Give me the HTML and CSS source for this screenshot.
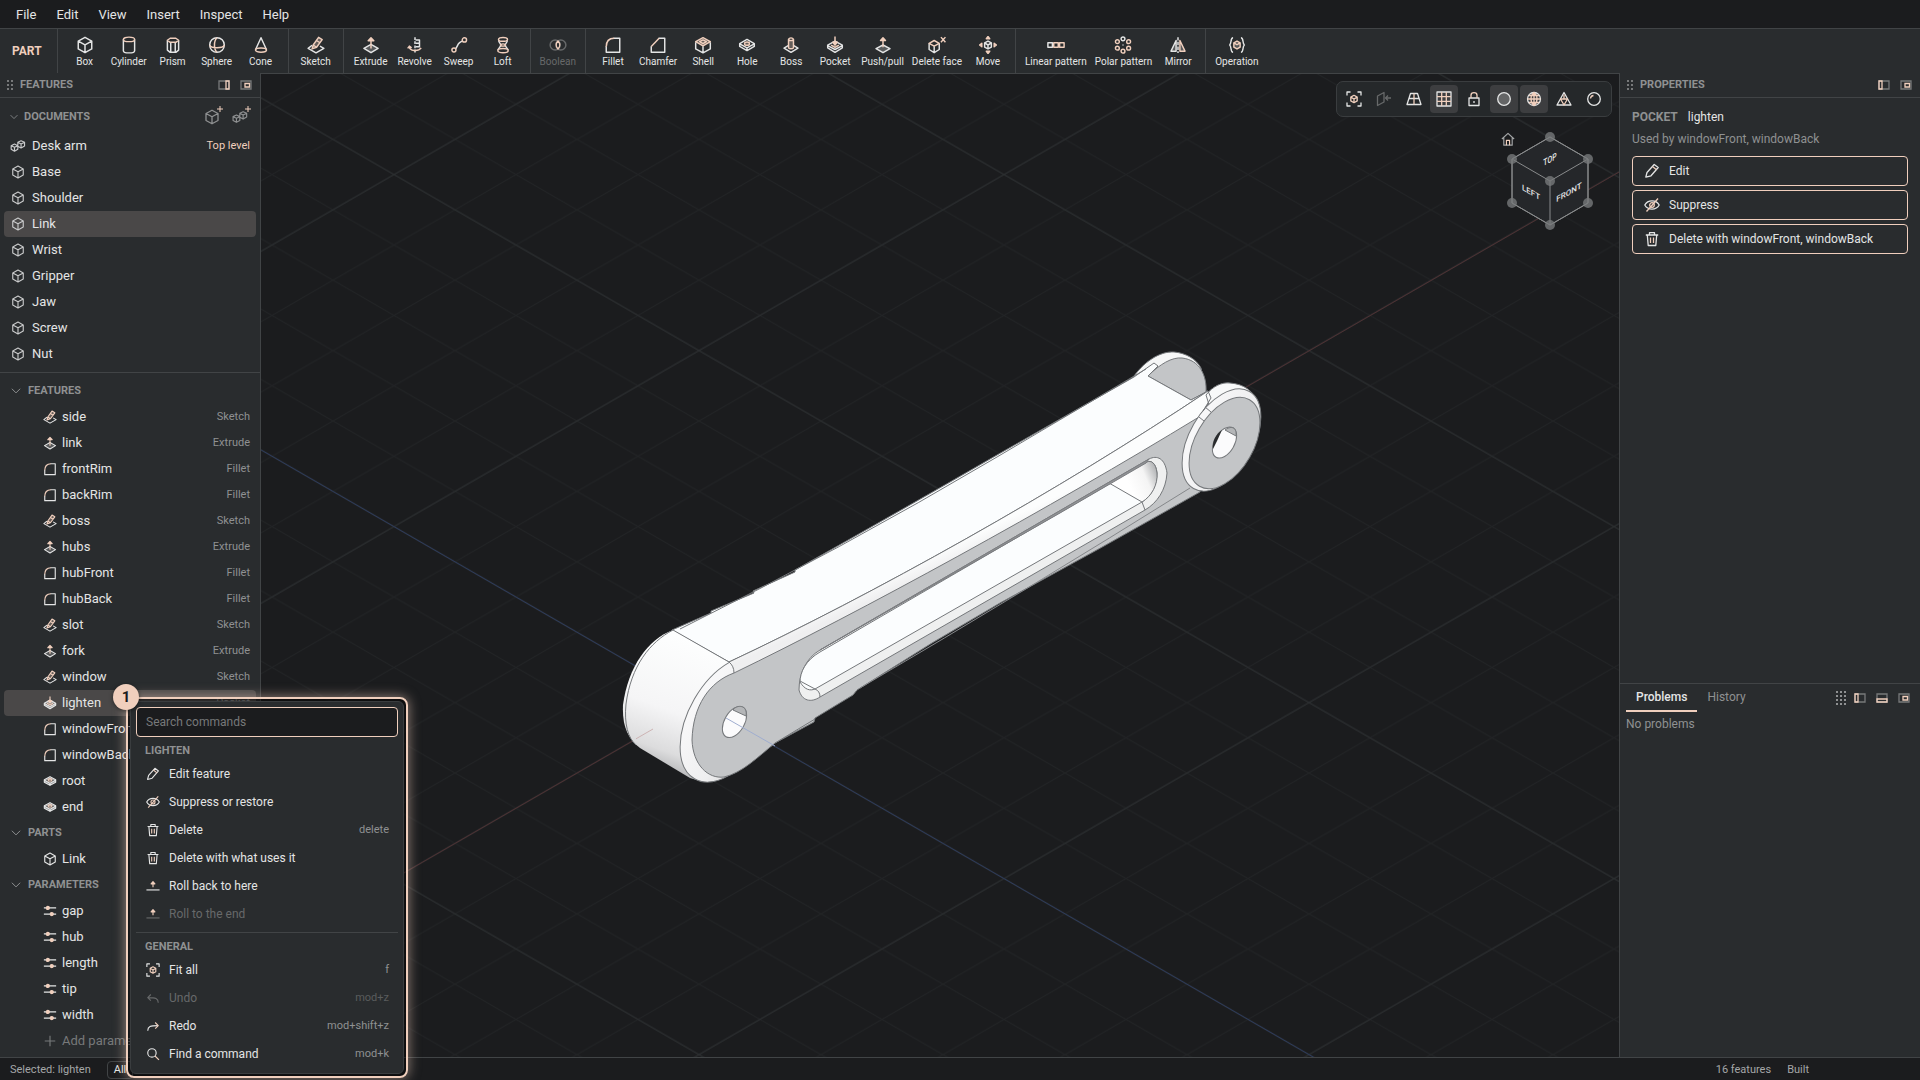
FILE: index.html
```html
<!DOCTYPE html>
<html lang="en">
<head>
<meta charset="utf-8">
<title>Desk arm – Link</title>
<link rel="stylesheet" href="styles.css">
</head>
<body>
<svg class="defs" aria-hidden="true">
  <symbol id="box" viewBox="0 0 16 16"><path d="M8 1.2 14 4.5v7L8 14.8 2 11.500v-7zM2 4.500l6 3.300 6-3.300M8 7.800v7"/></symbol>
  <symbol id="cylinder" viewBox="0 0 16 16"><path d="M3 3.200v9.800c0 1 2 2 5 2s5-1 5-2V3.200"/><ellipse class="a" cx="8" cy="3" rx="5" ry="2"/></symbol>
  <symbol id="prism" viewBox="0 0 16 16"><path d="M3 4v8.500L5.500 14.500h5L13 12.500V4M6 5.800v8.700M10 5.800v8.700"/><path class="a" d="M3 3.800 5.500 2h5L13 3.800 10.500 5.600h-5z"/></symbol>
  <symbol id="sphere" viewBox="0 0 16 16"><circle cx="8" cy="8" r="6.500"/><path class="a" d="M1.500 8c1 3.200 12 3.200 13 0M8 1.500C5 4 5 12 8 14.500"/></symbol>
  <symbol id="cone" viewBox="0 0 16 16"><path d="M3.200 12 8 1.500l4.800 10.500"/><ellipse class="a" cx="8" cy="12.500" rx="4.900" ry="1.900"/></symbol>
  <symbol id="sketch" viewBox="0 0 16 16"><path d="M4.500 8.200 1 11l7 4 7-4-3.500-2"/><path class="a g" d="M4.500 11.500 5.500 8l4.800-6.800 3.200 2L8.500 10zM8.500 4l3 2M5.500 8l3 2"/></symbol>
  <symbol id="extrude" viewBox="0 0 16 16"><path class="f" d="m8 7.500 6.300 3.500L8 14.800 1.700 11z"/><path class="a" d="M8 11V2M5.500 4.200 8 1.500l2.500 2.700z"/></symbol>
  <symbol id="revolve" viewBox="0 0 16 16"><path d="M8 1v14" stroke-dasharray="2.500 1.200"/><path d="M8.500 3.500h3.500v6H8.500M8.500 6.500H12"/><path class="a" d="M3 9.500c0 4 8 4.500 10.500 1M1.500 11 3 9l2 1.500"/></symbol>
  <symbol id="sweep" viewBox="0 0 16 16"><path d="M4.500 11.500c2.500-1 1.500-6 7-7"/><circle class="a" cx="3.500" cy="12.500" r="1.800"/><circle class="a" cx="12.800" cy="3.500" r="1.900"/></symbol>
  <symbol id="loft" viewBox="0 0 16 16"><path d="M4.200 4c0 2 1.800 2.500 1.800 4s-2 3-2.500 4.500M11.800 4c0 2-1.800 2.500-1.800 4s2 3 2.500 4.500"/><ellipse class="a" cx="8" cy="3" rx="4" ry="1.700"/><ellipse class="a" cx="8" cy="8" rx="2.200" ry="1"/><ellipse class="a" cx="8" cy="13" rx="4.600" ry="1.800"/></symbol>
  <symbol id="boolean" viewBox="0 0 16 16"><circle cx="5.500" cy="8" r="4.500"/><circle cx="10.500" cy="8" r="4.500"/><path class="a" d="M8 4.500c2 2 2 5 0 7-2-2-2-5 0-7z"/></symbol>
  <symbol id="fillet" viewBox="0 0 16 16"><path d="M8.500 2H14v12.500H2V9"/><path class="a" d="M2 9.500C2 5 4.500 2 9 2"/></symbol>
  <symbol id="chamfer" viewBox="0 0 16 16"><path d="M8.500 2H14v12.500H2V9"/><path class="a" d="M2 9.300 9 2"/></symbol>
  <symbol id="shell" viewBox="0 0 16 16"><path d="M1.500 5.500v6L8 15l6.500-3.500v-6M8 9v6"/><path class="a g" d="M8 1.500 14.500 5 8 8.800 1.500 5zM8 3.500 11 5 8 6.800 5 5z"/></symbol>
  <symbol id="hole" viewBox="0 0 16 16"><path d="m8 3 6.500 3.700v2.600L8 13 1.500 9.300V6.700zM1.500 7 8 10.500 14.500 7M8 10.500V13"/><ellipse class="a g" cx="8" cy="6.800" rx="2.200" ry="1.500"/></symbol>
  <symbol id="boss" viewBox="0 0 16 16"><path d="M5.500 8.500 1.800 10.700 8 14.500l6.200-3.800-3.700-2.200"/><path class="a g" d="M5.800 3v7.500c.8 1.200 3.600 1.200 4.400 0V3M5.800 3c.8-1.800 3.600-1.800 4.400 0-.8 1.500-3.600 1.500-4.400 0z"/></symbol>
  <symbol id="pocket" viewBox="0 0 16 16"><path d="m8 4.500 6.500 3.700v2.300L8 14.500l-6.500-4V8.200zM1.500 8.500 8 12l6.500-3.500"/><path class="a g" d="M8 .5v7M6 5.500 8 8l2-2.500zM4.500 8.200 8 10.200l3.500-2"/></symbol>
  <symbol id="pushpull" viewBox="0 0 16 16"><path class="f" d="m8 8 6.200 3.200L8 14.800l-6.200-3.600z"/><path class="a" d="M8 10V2M5.800 4 8 1.500 10.200 4z"/></symbol>
  <symbol id="delface" viewBox="0 0 16 16"><path d="M1 6.500V12l4.500 2.800L10 12V6.500M5.500 9v5.800"/><path class="a" d="M1 6.500 5.500 4 10 6.500 5.500 9zM11.500 1l4 4.500M15.500 1l-4 4.500"/></symbol>
  <symbol id="move" viewBox="0 0 16 16"><path d="m8 4.500 3 1.700v3.600L8 11.500 5 9.800V6.200zM5 6.200 8 8l3-1.800M8 8v3.500"/><path class="a g" d="M6.500 2.500 8 .5l1.500 2zM6.500 13.500l1.500 2 1.500-2zM2.500 6.500.5 8l2 1.500zM13.500 6.500l2 1.500-2 1.500z"/></symbol>
  <symbol id="linear" viewBox="0 0 16 16"><path d="M.8 6h4v4h-4z"/><path class="a" d="M6 6h4v4H6zM11.200 6h4v4h-4z"/></symbol>
  <symbol id="polar" viewBox="0 0 16 16"><circle cx="8" cy="2.500" r="1.700"/><g class="a"><circle cx="13" cy="5" r="1.700"/><circle cx="13" cy="10.800" r="1.700"/><circle cx="8" cy="13.500" r="1.700"/><circle cx="3" cy="10.800" r="1.700"/><circle cx="3" cy="5" r="1.700"/></g><path d="M8 7.500v1"/></symbol>
  <symbol id="mirror" viewBox="0 0 16 16"><path d="M6.300 4v9.500H1.800z" class="f"/><path class="a f" d="M9.700 4v9.500h4.500z"/><path d="M8 1v14" stroke-dasharray="3 1.200"/></symbol>
  <symbol id="operation" viewBox="0 0 16 16"><path d="M4.500 1.500c-2.500 0-1.200 5-3 6.500 1.800 1.500.5 6.500 3 6.500M11.500 1.500c2.500 0 1.200 5 3 6.500-1.800 1.500-.5 6.500-3 6.500"/><path class="a f" d="m8 4.500 2.800 1.600v3.800L8 11.500 5.200 9.900V6.100zM5.200 6.100 8 7.700l2.800-1.600"/></symbol>
  <symbol id="asm" viewBox="0 0 18 16"><path d="m5 5.800 3.800 1.800v4.200L5 14l-3.800-2.200V7.600zM1.200 7.600 5 9.500l3.800-1.900M5 9.500V14M12.500 2l4 1.800V8l-4 2.300L8.800 8.200V3.800zM8.800 3.800l3.700 2 4-2M12.500 5.800v4.500"/></symbol>
  <symbol id="plus" viewBox="0 0 16 16"><path d="M8 2v12M2 8h12"/></symbol>
  <symbol id="sliders" viewBox="0 0 16 16"><path d="M1 4.500h14M1 11.500h14"/><circle class="a s" cx="5.500" cy="4.500" r="1.800"/><circle class="a s" cx="10" cy="11.500" r="1.800"/></symbol>
  <symbol id="down" viewBox="0 0 16 16"><path d="m2.500 5 5.500 5.500L13.500 5"/></symbol>
  <symbol id="grip" viewBox="0 0 8 12"><path d="M1 1h2v2H1zM5 1h2v2H5zM1 5h2v2H1zM5 5h2v2H5zM1 9h2v2H1zM5 9h2v2H5z"/></symbol>
  <symbol id="dockr" viewBox="0 0 12 10"><path d="M1 1h10v8H1z"/><path class="a" d="M8 1h3v8H8z"/></symbol>
  <symbol id="dockl" viewBox="0 0 12 10"><path d="M1 1h10v8H1z"/><path class="a" d="M1 1h3v8H1z"/></symbol>
  <symbol id="dockb" viewBox="0 0 12 10"><path d="M1 1h10v8H1z"/><path class="a" d="M1 6h10v3H1z"/></symbol>
  <symbol id="float" viewBox="0 0 12 10"><path d="M1 1h10v8H1z"/><path class="a" d="M5 3.500h4.500v3.500H5z"/></symbol>
  <symbol id="pencil" viewBox="0 0 16 16"><path d="M1.800 14.200 3 9.500l7.200-8 4 3L7 12.800z"/><path class="a" d="m8.500 3.500 4 3.200"/></symbol>
  <symbol id="hide" viewBox="0 0 16 16"><path d="M.8 8c3-5.500 11.400-5.500 14.400 0-3 5.500-11.400 5.500-14.400 0z"/><circle class="a" cx="8" cy="8" r="2.300"/><path class="a" d="M2.500 14.500 14 1.500"/></symbol>
  <symbol id="trash" viewBox="0 0 16 16"><path d="M1.800 4h12.400M5.500 4V1.700h5V4M3.300 4l.9 10.500h7.600L12.700 4"/><path class="a" d="M6.500 6.500V12M9.500 6.500V12"/></symbol>
  <symbol id="roll" viewBox="0 0 16 16"><path d="M.5 12.500h15"/><path class="a" d="M8 9.500V4M5.800 5.500 8 3l2.200 2.500z"/></symbol>
  <symbol id="fit" viewBox="0 0 16 16"><path d="M1 4.500V1h3.500M11.500 1H15v3.500M15 11.500V15h-3.500M4.500 15H1v-3.500"/><path class="a" d="m8 4.300 3.200 1.800v3.800L8 11.700 4.800 9.900V6.100zM4.800 6.100 8 8l3.200-1.900M8 8v3.700"/></symbol>
  <symbol id="undo" viewBox="0 0 16 16"><path d="M14 13.500c0-5-3-6-11.500-6M5.500 4 2 7.500 5.500 11"/></symbol>
  <symbol id="redo" viewBox="0 0 16 16"><path d="M2 13.500c0-5 3-6 11.500-6"/><path class="a" d="M10.500 4 14 7.500 10.500 11"/></symbol>
  <symbol id="find" viewBox="0 0 16 16"><circle cx="6.800" cy="6.800" r="4.800"/><path class="a" d="m10.300 10.300 4.500 4.500"/></symbol>
  <symbol id="section" viewBox="0 0 16 16"><path d="M1.500 5 8 1.500V11l-6.500 3.500z"/><path d="M9.500 7H15M12 4.500 9.500 7 12 9.500"/></symbol>
  <symbol id="persp" viewBox="0 0 16 16"><path d="M4.500 2.500h7L15 13.500H1zM3 7.500h10"/><path class="a" d="M8 2.500v11"/></symbol>
  <symbol id="gridi" viewBox="0 0 16 16"><path d="M1 1h14v14H1z"/><path class="a" d="M5.700 1v14M10.300 1v14M1 5.700h14M1 10.300h14"/></symbol>
  <symbol id="lock" viewBox="0 0 16 16"><path d="M3 7h10v7.500H3zM8 10v2"/><path class="a" d="M5 7V4.200C5 .8 11 .8 11 4.200V7"/></symbol>
  <symbol id="disc" viewBox="0 0 16 16"><circle class="f" cx="8" cy="8" r="6.300"/></symbol>
  <symbol id="globe" viewBox="0 0 16 16"><circle cx="8" cy="8" r="6.500"/><path class="a" d="M8 1.500v13M1.500 8h13M3 4.500h10M3 11.500h10M8 1.500c-4 3-4 10 0 13 4-3 4-10 0-13z"/></symbol>
  <symbol id="tri" viewBox="0 0 16 16"><path d="M8 1.500 15 14H1z"/><path class="a" d="M4.500 8h7L8 14zM8 3.500V8"/></symbol>
  <symbol id="shine" viewBox="0 0 16 16"><circle cx="8" cy="8" r="6.300"/><path class="a" d="M4.500 7.500C4.700 5.800 5.800 4.700 7.500 4.500"/></symbol>
  <symbol id="home" viewBox="0 0 16 16"><path d="M1 8 8 1.500 15 8M3.200 6.500V15h9.600V6.500"/><path class="a" d="M6.200 15V9.500h3.600V15"/></symbol>
</svg>

<div class="app">
  <nav class="menubar">
    <button>File</button><button>Edit</button><button>View</button><button>Insert</button><button>Inspect</button><button>Help</button>
  </nav>

  <div class="toolbar">
    <div class="mode">PART</div>
    <div class="group">
      <button><svg><use href="#box"/></svg>Box</button>
      <button><svg><use href="#cylinder"/></svg>Cylinder</button>
      <button><svg><use href="#prism"/></svg>Prism</button>
      <button><svg><use href="#sphere"/></svg>Sphere</button>
      <button><svg><use href="#cone"/></svg>Cone</button>
    </div>
    <div class="group">
      <button><svg><use href="#sketch"/></svg>Sketch</button>
    </div>
    <div class="group">
      <button><svg><use href="#extrude"/></svg>Extrude</button>
      <button><svg><use href="#revolve"/></svg>Revolve</button>
      <button><svg><use href="#sweep"/></svg>Sweep</button>
      <button><svg><use href="#loft"/></svg>Loft</button>
    </div>
    <div class="group">
      <button disabled><svg><use href="#boolean"/></svg>Boolean</button>
    </div>
    <div class="group">
      <button><svg><use href="#fillet"/></svg>Fillet</button>
      <button><svg><use href="#chamfer"/></svg>Chamfer</button>
      <button><svg><use href="#shell"/></svg>Shell</button>
      <button><svg><use href="#hole"/></svg>Hole</button>
      <button><svg><use href="#boss"/></svg>Boss</button>
      <button><svg><use href="#pocket"/></svg>Pocket</button>
      <button><svg><use href="#pushpull"/></svg>Push/pull</button>
      <button><svg><use href="#delface"/></svg>Delete face</button>
      <button><svg><use href="#move"/></svg>Move</button>
    </div>
    <div class="group">
      <button><svg><use href="#linear"/></svg>Linear pattern</button>
      <button><svg><use href="#polar"/></svg>Polar pattern</button>
      <button><svg><use href="#mirror"/></svg>Mirror</button>
    </div>
    <div class="group">
      <button><svg><use href="#operation"/></svg>Operation</button>
    </div>
  </div>

  <div class="work">
    <aside class="left">
      <header class="panel-head">
        <svg class="grip"><use href="#grip"/></svg><h2>FEATURES</h2>
        <button class="dock" aria-label="Dock right"><svg><use href="#dockr"/></svg></button>
        <button class="dock" aria-label="Float"><svg><use href="#float"/></svg></button>
      </header>
      <section class="docs">
        <div class="docs-head">
          <svg class="chev"><use href="#down"/></svg><h3>DOCUMENTS</h3>
          <button class="new" aria-label="New part"><svg><use href="#box"/></svg><svg class="add"><use href="#plus"/></svg></button>
          <button class="new" aria-label="New assembly"><svg><use href="#asm"/></svg><svg class="add"><use href="#plus"/></svg></button>
        </div>
        <ul>
          <li><button class="row"><svg class="wide"><use href="#asm"/></svg>Desk arm<small class="top">Top level</small></button></li>
          <li><button class="row"><svg><use href="#box"/></svg>Base</button></li>
          <li><button class="row"><svg><use href="#box"/></svg>Shoulder</button></li>
          <li><button class="row on"><svg><use href="#box"/></svg>Link</button></li>
          <li><button class="row"><svg><use href="#box"/></svg>Wrist</button></li>
          <li><button class="row"><svg><use href="#box"/></svg>Gripper</button></li>
          <li><button class="row"><svg><use href="#box"/></svg>Jaw</button></li>
          <li><button class="row"><svg><use href="#box"/></svg>Screw</button></li>
          <li><button class="row"><svg><use href="#box"/></svg>Nut</button></li>
        </ul>
      </section>
      <section class="tree">
        <h3 class="branch"><svg><use href="#down"/></svg>FEATURES</h3>
        <ul>
          <li><button class="row"><svg><use href="#sketch"/></svg>side<small>Sketch</small></button></li>
          <li><button class="row"><svg><use href="#extrude"/></svg>link<small>Extrude</small></button></li>
          <li><button class="row"><svg><use href="#fillet"/></svg>frontRim<small>Fillet</small></button></li>
          <li><button class="row"><svg><use href="#fillet"/></svg>backRim<small>Fillet</small></button></li>
          <li><button class="row"><svg><use href="#sketch"/></svg>boss<small>Sketch</small></button></li>
          <li><button class="row"><svg><use href="#extrude"/></svg>hubs<small>Extrude</small></button></li>
          <li><button class="row"><svg><use href="#fillet"/></svg>hubFront<small>Fillet</small></button></li>
          <li><button class="row"><svg><use href="#fillet"/></svg>hubBack<small>Fillet</small></button></li>
          <li><button class="row"><svg><use href="#sketch"/></svg>slot<small>Sketch</small></button></li>
          <li><button class="row"><svg><use href="#extrude"/></svg>fork<small>Extrude</small></button></li>
          <li><button class="row"><svg><use href="#sketch"/></svg>window<small>Sketch</small></button></li>
          <li><button class="row on"><svg class="solid"><use href="#pocket"/></svg>lighten<small>Pocket</small></button></li>
          <li><button class="row"><svg><use href="#fillet"/></svg>windowFront</button></li>
          <li><button class="row"><svg><use href="#fillet"/></svg>windowBack</button></li>
          <li><button class="row"><svg class="solid"><use href="#hole"/></svg>root</button></li>
          <li><button class="row"><svg class="solid"><use href="#hole"/></svg>end</button></li>
        </ul>
        <h3 class="branch"><svg><use href="#down"/></svg>PARTS</h3>
        <ul><li><button class="row"><svg><use href="#box"/></svg>Link</button></li></ul>
        <h3 class="branch"><svg><use href="#down"/></svg>PARAMETERS</h3>
        <ul>
          <li><button class="row"><svg><use href="#sliders"/></svg>gap</button></li>
          <li><button class="row"><svg><use href="#sliders"/></svg>hub</button></li>
          <li><button class="row"><svg><use href="#sliders"/></svg>length</button></li>
          <li><button class="row"><svg><use href="#sliders"/></svg>tip</button></li>
          <li><button class="row"><svg><use href="#sliders"/></svg>width</button></li>
          <li><button class="row dim"><svg><use href="#plus"/></svg>Add parameter</button></li>
        </ul>
      </section>
    </aside>

    <main class="view">
      <svg class="scene" viewBox="261 74 1358 983" preserveAspectRatio="xMidYMid slice">
        <defs>
          <pattern id="minor" patternUnits="userSpaceOnUse" x="699" y="702.600" width="122" height="70.400">
            <path d="M-122-70.400 244 140.800M-122 140.800 244-70.400M0-70.400 244 70.400M-122 0 122 140.800M0 140.800 244 0M-122 70.400 122-70.400" stroke="#222426"/>
          </pattern>
          <pattern id="major" patternUnits="userSpaceOnUse" x="699" y="702.600" width="610" height="352">
            <path d="M-610-352 1220 704M-610 704 1220-352M0-352 1220 352M-610 0 610 704M0 704 1220 0M-610 352 610-352" stroke="#2c2f31"/>
          </pattern>
          <linearGradient id="end" gradientUnits="userSpaceOnUse" x1="690" y1="640" x2="645" y2="765">
            <stop offset="0" stop-color="#fdfefe"/><stop offset=".55" stop-color="#f5f5f6"/><stop offset=".85" stop-color="#dcdcdd"/><stop offset="1" stop-color="#b4b5b7"/>
          </linearGradient>
          <linearGradient id="rim" gradientUnits="userSpaceOnUse" x1="710" y1="650" x2="700" y2="785">
            <stop offset="0" stop-color="#fdfdfe"/><stop offset=".6" stop-color="#efeff0"/><stop offset="1" stop-color="#c2c3c5"/>
          </linearGradient>
          <linearGradient id="hub" gradientUnits="userSpaceOnUse" x1="1215" y1="385" x2="1225" y2="492">
            <stop offset="0" stop-color="#fdfdfe"/><stop offset=".65" stop-color="#eeeeef"/><stop offset="1" stop-color="#b2b4b6"/>
          </linearGradient>
          <linearGradient id="bevel" gradientUnits="userSpaceOnUse" x1="960" y1="541" x2="967" y2="556">
            <stop offset="0" stop-color="#fcfdfd"/><stop offset="1" stop-color="#efeff0"/>
          </linearGradient>
          <linearGradient id="cove" gradientUnits="userSpaceOnUse" x1="1125" y1="475" x2="1155" y2="462">
            <stop offset="0" stop-color="#fff"/><stop offset=".55" stop-color="#f4f4f4"/><stop offset="1" stop-color="#a9abad"/>
          </linearGradient>
        </defs>
        <rect x="-400" y="-400" width="2800" height="2200" fill="url(#minor)"/>
        <rect x="-400" y="-400" width="2800" height="2200" fill="url(#major)"/>
        <path d="M-400 1336.600 2100-105.400" stroke="#4e3133"/>
        <path d="M-400 68.500 2100 1511" stroke="#2d3b5c"/>
        <g class="model">
          <path d="M1132 379C1143 362 1160 351 1174 352 1186 353 1196 359 1201 368L1206 392 1190 402z" fill="#f6f7f7"/>
          <path d="M1148 376C1160 364 1172 357 1182 358 1200 360 1207 376 1206 392L1191 400z" fill="#c3c5c7"/>
          <path d="M729 662 1208 391 1212 398 1200 492Q1100 549 1000 603L932 643 857 690 853 695 815 718 814 722 775 743 743 768 720 770z" fill="#c3c5c7"/>
          <path d="M672 630 711 613V611L754 593 753 591 795 572V570Q900 511 997 455L1134 377 1154 363 1158 366 1148 376 1191 400 1208 391C1060 490 870 596 729 662z" fill="#fbfdfe"/>
          <path d="M673 630C648 639 628 667 623 705 622 726 628 739 640 748L690 778 700 781 729 720V662z" fill="url(#end)" stroke="none"/>
          <path d="M673 630C650 642 631 666 626 704 624 724 628 738 636 745M673 630 729 662"/>
          <ellipse cx="729" cy="719" rx="69" ry="40" transform="rotate(-60 729 719)" fill="url(#rim)"/>
          <path d="M734 673C709 682 693 706 692 740 693 765 708 779 724 777 742 773 758 757 775 743L857 690 850 615z" fill="#c3c5c7" stroke="none"/>
          <path d="M734 673C709 682 693 706 692 740 693 765 708 779 724 777 742 773 758 757 775 743L815 719"/>
          <path d="M729 662C870 596 1060 490 1208 391L1212 398 1199 417C1050 508 860 612 734 673Q734 666 729 662z" fill="url(#bevel)"/>
          <path d="M680 629Q840 550 997 457L1146 369"/>
          <path d="M860 688Q1030 588 1190 488" stroke="#85878a"/>
          <path d="M1206 395C1213 386 1222 382 1230 383 1244 384 1253 391 1258 402L1220 440z" fill="#f8f9f9"/>
          <ellipse cx="1221.500" cy="440" rx="56" ry="32" transform="rotate(-60 1221.500 440)" fill="url(#hub)"/>
          <ellipse cx="1224.500" cy="443" rx="50" ry="29" transform="rotate(-60 1224.500 443)" fill="#c3c5c7"/>
          <path d="M1205 407 1211 412M1199 417 1204 421M1208 391 1211 398 1203 411"/>
          <path d="M820 650C806 658 799 674 799 690 802 701 811 703 820 697L1145 510C1157 503 1166 490 1167 473 1165 458 1157 455 1149 459z" fill="#eff0f0"/>
          <path d="M820 652C806 660 800 672 800 682 805 690 810 691 815 689L1142 502C1152 496 1157 484 1157 473 1156 463 1151 460 1147 462z" fill="#fbfdfe"/>
          <path d="M1109 483 1142 502C1152 496 1158 484 1157 473 1156 463 1151 460 1147 462z" fill="url(#cove)"/>
          <path d="M820 650 1149 459 1146 463 1060 513z" fill="#909295" stroke="#7c7e81"/>
          <path d="M800 681 815 689Q820 691 820 697M1142 502 1145 510"/>
          <ellipse cx="734.500" cy="722" rx="17" ry="10" transform="rotate(-60 734.500 722)" fill="#fbfbfc"/>
          <path d="M733 710C737 704 748 705 746 716z" fill="#b4b6b8"/>
          <ellipse cx="1224.500" cy="442.500" rx="17" ry="10" transform="rotate(-60 1224.500 442.500)" fill="#fbfbfc"/>
          <path d="M1225 430C1230 426 1237 426 1236 436z" fill="#b4b6b8"/>
          <path d="M1213 449C1212 441 1216 434 1222 430L1217 441z" fill="#2a2c2e" stroke="none"/>
          <path d="M726 718 775 746" stroke="#9fadcf"/>
          <path d="M636 738.800 653 729" stroke="#cdb4b4"/>
        </g>
      </svg>

      <div class="viewtools">
        <button aria-label="Fit all"><svg><use href="#fit"/></svg></button>
        <button aria-label="Section" disabled><svg><use href="#section"/></svg></button>
        <button aria-label="Perspective"><svg><use href="#persp"/></svg></button>
        <button aria-label="Grid" class="on"><svg><use href="#gridi"/></svg></button>
        <button aria-label="Lock"><svg><use href="#lock"/></svg></button>
        <button aria-label="Shaded" class="on"><svg><use href="#disc"/></svg></button>
        <button aria-label="Edges" class="on"><svg><use href="#globe"/></svg></button>
        <button aria-label="Mesh"><svg><use href="#tri"/></svg></button>
        <button aria-label="Gloss"><svg><use href="#shine"/></svg></button>
      </div>
      <button class="homebtn" aria-label="Home view"><svg><use href="#home"/></svg></button>
      <svg class="cube" viewBox="0 0 88 100">
        <path d="M44 6 82 28v44L44 94 6 72V28z" fill="#25272a" />
        <path d="M44 6 82 28v44L44 94 6 72V28zM6 28l38 22 38-22M44 50v44"/>
        <g class="dots"><circle cx="44" cy="6" r="5"/><circle cx="6" cy="28" r="5"/><circle cx="82" cy="28" r="5"/><circle cx="44" cy="50" r="5"/><circle cx="6" cy="72" r="5"/><circle cx="82" cy="72" r="5"/><circle cx="44" cy="94" r="5"/></g>
        <text transform="translate(44 28) rotate(-30) skewX(-30)" y="3">TOP</text>
        <text transform="translate(25 61) skewY(30)" y="3">LEFT</text>
        <text transform="translate(63 61) skewY(-30)" y="3">FRONT</text>
      </svg>
    </main>

    <aside class="right">
      <section class="props">
        <header class="panel-head">
          <svg class="grip"><use href="#grip"/></svg><h2>PROPERTIES</h2>
          <button class="dock" aria-label="Dock left"><svg><use href="#dockl"/></svg></button>
          <button class="dock" aria-label="Float"><svg><use href="#float"/></svg></button>
        </header>
        <div class="props-body">
          <p class="what"><b>POCKET</b><span>lighten</span></p>
          <p class="used">Used by windowFront, windowBack</p>
          <button class="act"><svg><use href="#pencil"/></svg>Edit</button>
          <button class="act"><svg><use href="#hide"/></svg>Suppress</button>
          <button class="act"><svg><use href="#trash"/></svg>Delete with windowFront, windowBack</button>
        </div>
      </section>
      <section class="problems">
        <div class="tabs">
          <button class="on">Problems</button><button>History</button>
          <span class="dots9"></span>
          <button class="dock" aria-label="Dock left"><svg><use href="#dockl"/></svg></button>
          <button class="dock" aria-label="Dock bottom"><svg><use href="#dockb"/></svg></button>
          <button class="dock" aria-label="Float"><svg><use href="#float"/></svg></button>
        </div>
        <p>No problems</p>
      </section>
    </aside>
  </div>

  <footer class="status">
    <span>Selected: lighten</span><button>All</button>
    <span class="count">16 features</span><span>Built</span>
  </footer>
</div>

<div class="popup">
  <span class="badge">1</span>
  <div class="menu">
    <input type="text" placeholder="Search commands" aria-label="Search commands">
    <h4>LIGHTEN</h4>
    <button><svg><use href="#pencil"/></svg>Edit feature</button>
    <button><svg><use href="#hide"/></svg>Suppress or restore</button>
    <button><svg><use href="#trash"/></svg>Delete<kbd>delete</kbd></button>
    <button><svg><use href="#trash"/></svg>Delete with what uses it</button>
    <button><svg><use href="#roll"/></svg>Roll back to here</button>
    <button disabled><svg><use href="#roll"/></svg>Roll to the end</button>
    <hr>
    <h4>GENERAL</h4>
    <button><svg><use href="#fit"/></svg>Fit all<kbd>f</kbd></button>
    <button disabled><svg><use href="#undo"/></svg>Undo<kbd>mod+z</kbd></button>
    <button><svg><use href="#redo"/></svg>Redo<kbd>mod+shift+z</kbd></button>
    <button><svg><use href="#find"/></svg>Find a command<kbd>mod+k</kbd></button>
  </div>
</div>
</body>
</html>
```
FILE: styles.css
```css
:root {
  --bg: #1b1c1e;
  --panel: #292c2e;
  --line: #414446;
  --text: #e4e5e5;
  --muted: #8f9192;
  --accent: #f0cfbd;
}
* { box-sizing: border-box; }
body {
  margin: 0;
  background: var(--bg);
  color: var(--text);
  font: 13px/16px Roboto, "Liberation Sans", sans-serif;
}
h2, h3, h4, p, ul { margin: 0; padding: 0; }
ul { list-style: none; }
h2, h3, h4 { font-size: 11px; font-weight: 700; color: var(--muted); }
button {
  margin: 0; padding: 0; border: 0; background: none;
  color: inherit; font: inherit; text-align: left;
}
svg { display: block; flex: none; fill: none; stroke: currentColor; stroke-width: 1.3; stroke-linejoin: round; }
.defs { position: absolute; width: 0; height: 0; }
.a { stroke: var(--accent); }
.f { fill: rgba(160, 160, 160, .4); }
.g { fill: rgba(240, 207, 189, .3); }
.s { fill: var(--accent); }
button:disabled { color: #67696a; }
button:disabled .a { stroke: currentColor; }

.app { display: flex; flex-direction: column; height: 100vh; overflow: hidden; }

.menubar { display: flex; flex: none; height: 28px; padding-left: 6px; }
.menubar button { padding: 2px 10px 0; }

.toolbar {
  display: flex; flex: none; height: 45px;
  background: var(--panel); border-top: 1px solid var(--line);
}
.mode {
  display: flex; align-items: center; padding: 0 15px 0 12px;
  color: var(--accent); font-size: 12px; font-weight: 700;
}
.group { display: flex; gap: 2px; padding: 0 6px; border-left: 1px solid var(--line); }
.group button {
  display: flex; flex-direction: column; align-items: center;
  min-width: 42px; padding: 8px 3px 0; font-size: 10px; line-height: 14px;
}
.group svg { width: 18px; height: 18px; margin-top: -1px; margin-bottom: 1px; }

.work { display: flex; flex: 1; min-height: 0; }
.left { flex: none; width: 260px; background: var(--panel); overflow: hidden; }
.right { display: flex; flex-direction: column; flex: none; width: 300px; background: var(--panel); }
.view { position: relative; flex: 1; min-width: 0; border: 1px solid var(--line); border-bottom: 0; overflow: hidden; }

.panel-head {
  display: flex; align-items: center; height: 25px; gap: 10px;
  padding: 0 8px 0 6px; border-bottom: 1px solid var(--line);
}
.panel-head h2 { flex: 1; margin-left: -4px; }
.grip { width: 8px; height: 12px; fill: #77797a; stroke: none; }
.dock { color: #77797a; }
.dock svg { width: 12px; height: 10px; stroke-linejoin: miter; }
.dock .a { fill: rgba(240, 207, 189, .3); }

.docs { padding-bottom: 5px; border-bottom: 1px solid var(--line); }
.docs-head { display: flex; align-items: center; height: 35px; padding: 2px 12px 0 9px; gap: 12px; color: var(--muted); }
.docs-head h3 { flex: 1; margin-left: -7px; }
.chev { width: 10px; height: 10px; }
.new { position: relative; width: 16px; height: 16px; }
.new svg { width: 16px; height: 16px; }
.new .add { position: absolute; right: -4px; top: -4px; width: 8px; height: 8px; stroke-width: 2; color: var(--accent); }

.row {
  display: flex; align-items: center; gap: 7px;
  width: 252px; height: 26px; margin-left: 4px; padding: 0 6px 0 7px; border-radius: 4px;
}
.row svg { width: 14px; height: 14px; }
.row svg.wide { width: 16px; margin: 0 -1px; }
.row small { margin-left: auto; font-size: 11px; color: var(--muted); }
.row small.top { color: var(--accent); }
.row.on { background: #4a4848; }
.row.dim { color: #77797a; }
.row .solid { fill: rgba(228, 229, 229, .6); }
.docs .row svg { color: #c9cacb; }
.tree { padding-top: 5px; }
.tree .row { padding-left: 39px; gap: 5px; }
.branch { display: flex; align-items: center; gap: 6px; height: 26px; padding-left: 10px; }
.branch svg { width: 12px; height: 12px; }

.scene { position: absolute; inset: 0; width: 100%; height: 100%; stroke-width: 1; }
.model { stroke: #75787b; stroke-width: 1; }

.viewtools {
  position: absolute; top: 7px; right: 7px; display: flex; gap: 2px; padding: 3px;
  background: #25282a; border: 1px solid #3a3d3f; border-radius: 7px;
}
.viewtools button { display: grid; place-items: center; width: 28px; height: 28px; border-radius: 4px; }
.viewtools button.on { background: #3d3e40; }
.viewtools svg { width: 16px; height: 16px; }
.homebtn { position: absolute; top: 58px; right: 104px; color: #a5a7a8; }
.homebtn svg { width: 14px; height: 14px; }
.cube { position: absolute; top: 57px; right: 25px; width: 88px; height: 100px; stroke: #898b8c; stroke-width: 1; }
.dots { fill: #77797a; fill-opacity: .8; stroke: none; }
.cube text { fill: var(--text); stroke: none; font-size: 8px; font-weight: 500; text-anchor: middle; }

.props { flex: 1; }
.props-body { display: flex; flex-direction: column; gap: 4px; padding: 10px 12px; font-size: 12px; }
.what { display: flex; gap: 10px; line-height: 18px; }
.what b { font-weight: 700; color: var(--muted); }
.used { margin-bottom: 4px; line-height: 18px; color: var(--muted); }
.act {
  display: flex; align-items: center; gap: 9px; height: 30px; padding: 0 11px;
  border: 1px solid var(--accent); border-radius: 4px;
}
.act svg { width: 16px; height: 16px; }

.problems { height: 374px; border-top: 1px solid var(--line); padding-left: 6px; font-size: 12px; color: var(--muted); }
.tabs { display: flex; align-items: center; gap: 10px; height: 28px; padding-right: 10px; }
.tabs button:not(.dock) { height: 28px; padding: 0 10px; margin-right: -10px; border-bottom: 2px solid transparent; }
.tabs button.on { color: var(--text); font-weight: 500; border-color: var(--accent); }
.dots9 {
  width: 11px; height: 14px; margin: 0 -3px 0 auto;
  background: radial-gradient(circle at 1px 1px, #8f9192 1px, transparent 1px) 0 0 / 4px 4px;
}
.problems p { padding-top: 4px; }

.status {
  display: flex; align-items: center; flex: none; height: 23px; padding: 1px 111px 0 10px;
  border-top: 1px solid var(--line); font-size: 11px; color: #a5a7a8; gap: 16px;
}
.status button { height: 18px; padding: 0 6px; border: 1px solid var(--line); border-radius: 4px; color: var(--text); }
.count { margin-left: auto; }

.popup {
  position: absolute; left: 126px; bottom: 2px; width: 282px; padding: 2px;
  border: 2px solid var(--accent); border-radius: 8px;
  box-shadow: 0 0 12px 1px rgba(240, 207, 189, .5), inset 0 0 4px 2px rgba(0, 0, 0, .7);
}
.badge {
  position: absolute; left: -15px; top: -15px; width: 26px; height: 26px; border-radius: 50%;
  background: var(--accent); color: #1b1c1e; font-weight: 700; font-size: 15px; line-height: 26px; text-align: center;
  box-shadow: 0 1px 4px rgba(0, 0, 0, .5);
}
.menu {
  display: flex; flex-direction: column; padding: 5px;
  background: var(--panel); border: 1px solid #3a3d3f; border-radius: 6px; font-size: 12px;
}
.menu input {
  height: 30px; padding: 0 9px; background: var(--bg); border: 1px solid var(--accent); border-radius: 4px;
  color: var(--text); font: inherit; outline: 0;
}
.menu input::placeholder { color: #77797a; opacity: 1; }
.menu h4 { height: 23px; padding: 6px 9px 0; line-height: 16px; }
.menu button { display: flex; align-items: center; gap: 9px; height: 28px; padding: 0 9px 0 10px; }
.menu svg { width: 14px; height: 14px; }
.menu kbd { margin-left: auto; font: inherit; font-size: 11px; color: var(--muted); }
.menu button:disabled kbd { color: #5a5c5d; }
.menu hr { width: 100%; margin: 4px 0 0; border: 0; border-top: 1px solid var(--line); }
```
